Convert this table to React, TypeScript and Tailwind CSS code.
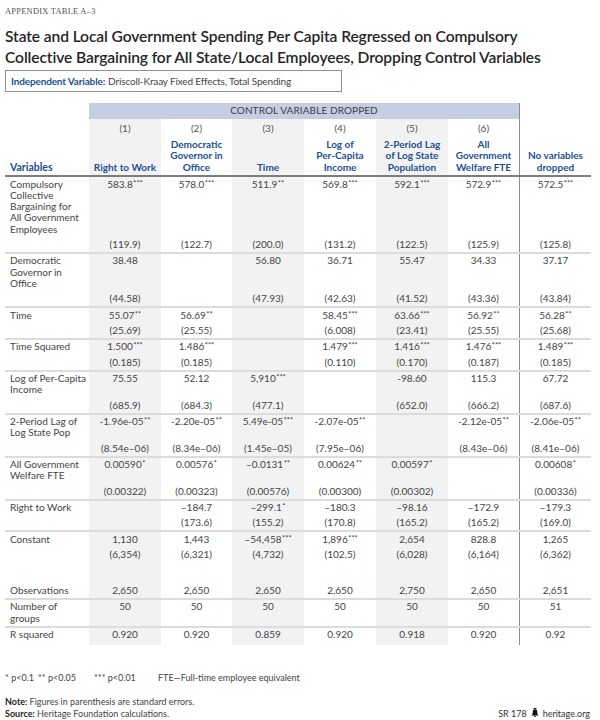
import React from 'react';

type Row = { label: string[]; coef: string[]; se: string[] };

const rows: Row[] = [
  {
    label: ['Compulsory', 'Collective', 'Bargaining for', 'All Government', 'Employees'],
    coef: ['583.8***', '578.0***', '511.9**', '569.8***', '592.1***', '572.9***', '572.5***'],
    se: ['(119.9)', '(122.7)', '(200.0)', '(131.2)', '(122.5)', '(125.9)', '(125.8)'],
  },
  {
    label: ['Democratic', 'Governor in', 'Office'],
    coef: ['38.48', '', '56.80', '36.71', '55.47', '34.33', '37.17'],
    se: ['(44.58)', '', '(47.93)', '(42.63)', '(41.52)', '(43.36)', '(43.84)'],
  },
  {
    label: ['Time'],
    coef: ['55.07**', '56.69**', '', '58.45***', '63.66***', '56.92**', '56.28**'],
    se: ['(25.69)', '(25.55)', '', '(6.008)', '(23.41)', '(25.55)', '(25.68)'],
  },
  {
    label: ['Time Squared'],
    coef: ['1.500***', '1.486***', '', '1.479***', '1.416***', '1.476***', '1.489***'],
    se: ['(0.185)', '(0.185)', '', '(0.110)', '(0.170)', '(0.187)', '(0.185)'],
  },
  {
    label: ['Log of Per-Capita', 'Income'],
    coef: ['75.55', '52.12', '5,910***', '', '-98.60', '115.3', '67.72'],
    se: ['(685.9)', '(684.3)', '(477.1)', '', '(652.0)', '(666.2)', '(687.6)'],
  },
  {
    label: ['2-Period Lag of', 'Log State Pop'],
    coef: ['-1.96e-05**', '-2.20e-05**', '5.49e-05***', '-2.07e-05**', '', '-2.12e-05**', '-2.06e-05**'],
    se: ['(8.54e–06)', '(8.34e–06)', '(1.45e–05)', '(7.95e–06)', '', '(8.43e–06)', '(8.41e–06)'],
  },
  {
    label: ['All Government', 'Welfare FTE'],
    coef: ['0.00590*', '0.00576*', '–0.0131**', '0.00624**', '0.00597*', '', '0.00608*'],
    se: ['(0.00322)', '(0.00323)', '(0.00576)', '(0.00300)', '(0.00302)', '', '(0.00336)'],
  },
  {
    label: ['Right to Work'],
    coef: ['', '–184.7', '–299.1*', '–180.3', '–98.16', '–172.9', '–179.3'],
    se: ['', '(173.6)', '(155.2)', '(170.8)', '(165.2)', '(165.2)', '(169.0)'],
  },
];

const constant: Row = {
  label: ['Constant'],
  coef: ['1,130', '1,443', '–54,458***', '1,896***', '2,654', '828.8', '1,265'],
  se: ['(6,354)', '(6,321)', '(4,732)', '(102.5)', '(6,028)', '(6,164)', '(6,362)'],
};

const stats = [
  { label: ['Observations'], vals: ['2,650', '2,650', '2,650', '2,650', '2,750', '2,650', '2,651'] },
  { label: ['Number of', 'groups'], vals: ['50', '50', '50', '50', '50', '50', '51'] },
  { label: ['R squared'], vals: ['0.920', '0.920', '0.859', '0.920', '0.918', '0.920', '0.92'] },
];

const heads = [
  ['Right to Work'],
  ['Democratic', 'Governor in', 'Office'],
  ['Time'],
  ['Log of', 'Per-Capita', 'Income'],
  ['2-Period Lag', 'of Log State', 'Population'],
  ['All', 'Government', 'Welfare FTE'],
];

const GRID = 'grid grid-cols-[84px_72px_71px_72px_72px_72px_71px_72px]';

// gray stripes on columns 1, 3, 5 and a rule before the last column
const colCls = (i: number) =>
  i === 6 ? 'border-l border-[#8c8c8c]' : i % 2 === 0 ? 'bg-[#f2f2f2]' : '';

const Val: React.FC<{ v: string }> = ({ v }) => {
  const m = v.match(/^(.*?)(\*+)$/);
  if (!m) return <>{v}</>;
  return (
    <>
      {m[1]}
      <span className="text-[7.5px] relative top-[-2px] ml-[0.5px]">{m[2]}</span>
    </>
  );
};

const Lines: React.FC<{ lines: string[] }> = ({ lines }) => (
  <>
    {lines.map((l, i) => (
      <React.Fragment key={i}>
        {i > 0 && <br />}
        {l}
      </React.Fragment>
    ))}
  </>
);

const Bell = () => (
  <svg width="8" height="9" viewBox="0 0 8 9" className="inline-block mx-[4px] relative top-[-1px]">
    <rect x="2.5" y="0" width="3" height="1.2" fill="#111" />
    <rect x="3.5" y="1" width="1" height="1" fill="#111" />
    <path d="M2 2 H6 L6.6 6.5 L7.6 7.6 H0.4 L1.4 6.5 Z" fill="#111" />
    <rect x="3.3" y="7.6" width="1.4" height="1.4" fill="#111" />
  </svg>
);

export default function App() {
  return (
    <div className="w-[600px] h-[720px] bg-white text-[#454545] font-['Lato',sans-serif] overflow-hidden">
      {/* Title block */}
      <div className="px-[5px] pt-[6px]">
        <div className="font-['Liberation_Serif',serif] text-[8.5px] tracking-[0.2px] text-[#555] leading-[10px]">
          APPENDIX TABLE A–3
        </div>
        <h1 className="mt-[10px] text-[15.6px] leading-[21px] font-semibold text-[#262626] tracking-[-0.1px]">
          State and Local Government Spending Per Capita Regressed on Compulsory
          <br />
          Collective Bargaining for All State/Local Employees, Dropping Control Variables
        </h1>
        <div className="mt-[2px] w-[337px] h-[22px] border border-[#8f8f8f] flex items-center px-[5px] text-[10px] tracking-[-0.15px] text-[#444]">
          <span className="font-bold text-[#1f4f91] mr-[3px]">Independent Variable:</span>
          Driscoll-Kraay Fixed Effects, Total Spending
        </div>
      </div>

      {/* Table */}
      <div className="ml-[5px] mt-[11px] w-[586px] text-[10px] leading-[11.5px]">
        {/* header */}
        <div className={`${GRID} border-b-2 border-[#7d7d7d]`}>
          <div />
          <div className="col-span-6 h-[16px] bg-[#c6cee3] flex items-center justify-center text-[10px] text-[#3d3d3d] tracking-[0.1px]">
            CONTROL VARIABLE DROPPED
          </div>
          <div className="border-l border-[#8c8c8c]" />

          <div className="h-[56px] flex items-end pl-[5px] pb-[2px] font-bold text-[10.5px] text-[#1f4f91]">
            Variables
          </div>
          {heads.map((h, i) => (
            <div key={i} className={`h-[56px] flex flex-col justify-between items-center pt-[4px] pb-[2px] ${colCls(i)}`}>
              <div className="text-[#555]">({i + 1})</div>
              <div className="text-center font-bold text-[#1f4f91] leading-[11.5px]">
                <Lines lines={h} />
              </div>
            </div>
          ))}
          <div className={`h-[56px] flex items-end justify-center pb-[2px] text-center font-bold text-[#1f4f91] ${colCls(6)}`}>
            <div>
              No variables
              <br />
              dropped
            </div>
          </div>
        </div>

        {/* coefficient rows */}
        {[...rows, constant].map((r, ri) => (
          <div key={ri} className={`${GRID} ${ri < rows.length ? 'border-b-2 border-[#dcdcdc]' : ''}`}>
            <div className="pl-[5px] pt-[1.5px] pb-[17px] leading-[11.25px]">
              <Lines lines={r.label} />
            </div>
            {r.coef.map((c, i) => (
              <div key={i} className={`flex flex-col justify-between items-center pt-[1.5px] pb-[1.5px] ${colCls(i)}`}>
                <div className="whitespace-nowrap">
                  <Val v={c} />
                </div>
                <div className="whitespace-nowrap">{r.se[i]}</div>
              </div>
            ))}
          </div>
        ))}

        {/* spacer */}
        <div className={GRID}>
          {Array.from({ length: 8 }).map((_, i) => (
            <div key={i} className={`h-[21px] ${i === 0 ? '' : colCls(i - 1)}`} />
          ))}
        </div>

        {/* summary rows */}
        {stats.map((s, ri) => (
          <div key={ri} className={`${GRID} ${ri < stats.length - 1 ? 'border-b-2 border-[#dcdcdc]' : ''}`}>
            <div className={`pl-[5px] pt-[1.5px] ${ri === stats.length - 1 ? 'pb-[4px]' : 'pb-[1.5px]'}`}>
              <Lines lines={s.label} />
            </div>
            {s.vals.map((v, i) => (
              <div key={i} className={`text-center pt-[1.5px] ${colCls(i)}`}>
                {v}
              </div>
            ))}
          </div>
        ))}
      </div>

      {/* Footer */}
      <div className="px-[5px] mt-[27px] text-[9px] leading-[12px] text-[#444]">
        <div className="flex">
          <span className="w-[33px]">* p&lt;0.1</span>
          <span className="w-[56px]">** p&lt;0.05</span>
          <span className="w-[64px]">*** p&lt;0.01</span>
          <span>FTE—Full-time employee equivalent</span>
        </div>
        <div className="mt-[12px]">
          <span className="font-bold text-[#222]">Note:</span> Figures in parenthesis are standard errors.
        </div>
        <div className="flex justify-between">
          <div>
            <span className="font-bold text-[#222]">Source:</span> Heritage Foundation calculations.
          </div>
          <div className="flex items-center text-[#333] pr-[5px]">
            SR 178
            <Bell />
            heritage.org
          </div>
        </div>
      </div>
    </div>
  );
}
